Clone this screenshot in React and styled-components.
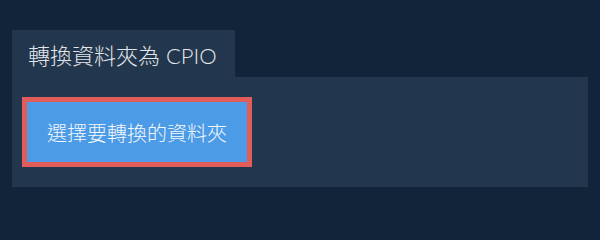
import React from "react";
import styled, { createGlobalStyle } from "styled-components";

const GlobalStyle = createGlobalStyle`
  html, body {
    margin: 0;
    padding: 0;
    background: #11243a;
  }
  body {
    font-family: Lato, "Noto Sans CJK TC", sans-serif;
  }
`;

const Page = styled.div`
  width: 600px;
  height: 230px;
  box-sizing: border-box;
  padding: 30px 12px 0 12px;
  background: #11243a;
`;

const Tab = styled.div`
  display: inline-flex;
  align-items: center;
  height: 47px;
  padding: 0 18px 0 16px;
  background: #22364d;
  color: #e2e6ea;
  font-size: 22px;
  font-weight: 300;
`;

const Panel = styled.div`
  display: flex;
  align-items: center;
  height: 110px;
  box-sizing: border-box;
  padding: 20px 10px;
  background: #22364d;
`;

const PickButton = styled.button`
  width: 230px;
  height: 70px;
  box-sizing: border-box;
  border: 5px solid #e05d5a;
  background: #4c9be6;
  color: #f4f8fc;
  font-family: Lato, "Noto Sans CJK TC", sans-serif;
  font-size: 20px;
  font-weight: 300;
  cursor: pointer;
  padding: 0;
`;

const App = () => {
  return (
    <>
      <GlobalStyle />
      <Page>
        <Tab>轉換資料夾為 CPIO</Tab>
        <Panel>
          <PickButton>選擇要轉換的資料夾</PickButton>
        </Panel>
      </Page>
    </>
  );
};

export default App;
